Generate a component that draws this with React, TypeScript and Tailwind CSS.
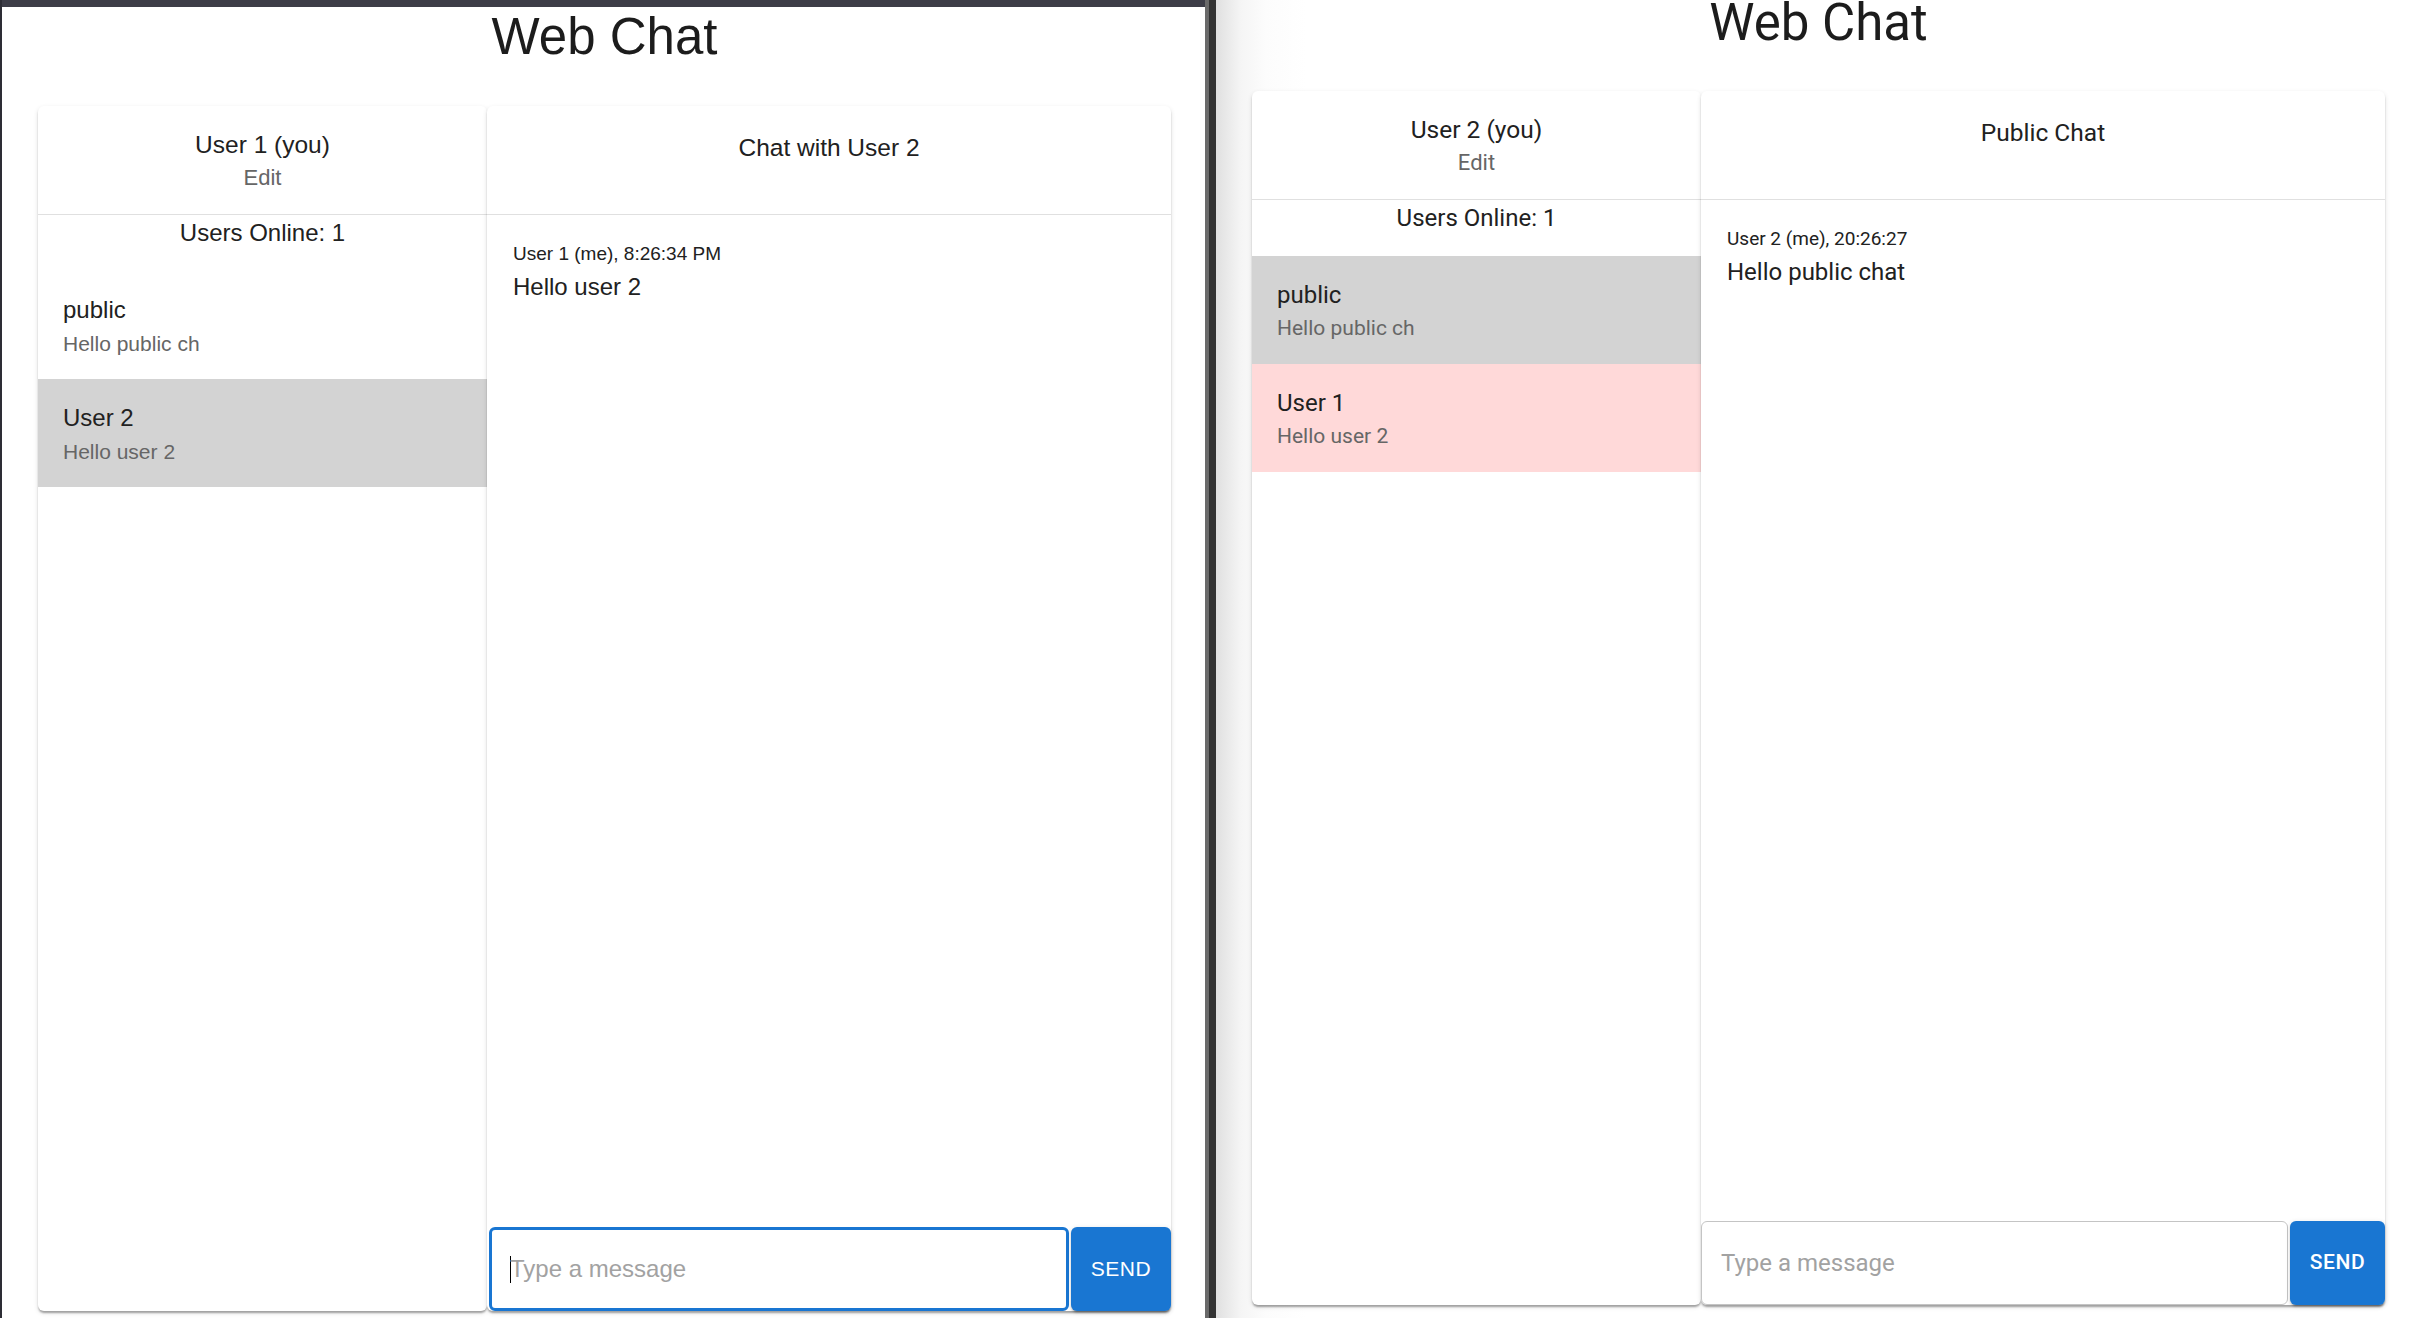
import React from "react";

type Row = { name: string; last: string; bg: string };

type CardProps = {
  me: string;
  rows: Row[];
  chatTitle: string;
  meta: string;
  msg: string;
  focused: boolean;
  heightClass: string;
  sendWidthClass: string;
};

const paperShadow =
  "shadow-[0px_3px_2px_-1px_rgba(0,0,0,0.2),0px_2px_2px_0px_rgba(0,0,0,0.14),0px_2px_5px_0px_rgba(0,0,0,0.12)]";

function Card({ me, rows, chatTitle, meta, msg, focused, heightClass, sendWidthClass }: CardProps) {
  return (
    <div className={`flex w-[1133px] ${heightClass}`}>
      <div className={`flex w-[449px] shrink-0 flex-col rounded-[6px] bg-white ${paperShadow}`}>
        <div className="flex h-[109px] shrink-0 flex-col items-center border-b border-[#e0e0e0] pt-[24px]">
          <div className="text-[24.5px] leading-[30px] text-[#212121]">{me}</div>
          <div className="mt-[3px] text-[22px] leading-[30px] text-[#666666]">Edit</div>
        </div>
        <div className="h-[56px] shrink-0 text-center text-[24px] leading-[36px] text-[#212121]">
          Users Online: 1
        </div>
        {rows.map((r) => (
          <div key={r.name} className={`h-[108px] shrink-0 pl-[25px] pt-[21px] ${r.bg}`}>
            <div className="text-[24px] leading-[36px] text-[#212121]">{r.name}</div>
            <div className="text-[21px] leading-[31px] text-[#666666]">{r.last}</div>
          </div>
        ))}
      </div>
      <div className={`flex w-[684px] shrink-0 flex-col rounded-[6px] bg-white ${paperShadow}`}>
        <div className="h-[109px] shrink-0 border-b border-[#e0e0e0] pt-[27px] text-center text-[24.5px] leading-[30px] text-[#212121]">
          {chatTitle}
        </div>
        <div className="flex-1 pl-[26px] pt-[25px]">
          <div className="text-[19px] leading-[27px] text-[#212121]">{meta}</div>
          <div className="mt-[2px] text-[24px] leading-[36px] text-[#212121]">{msg}</div>
        </div>
        <div className="flex h-[84px] shrink-0 gap-[2px]">
          {focused ? (
            <div className="ml-[2px] flex flex-1 items-center rounded-[6px] border-[3px] border-[#1976d2] bg-white pl-[18px]">
              <span className="-mr-px inline-block h-[27px] w-px bg-black" />
              <span className="text-[24px] text-[#a2a2a2]">Type a message</span>
            </div>
          ) : (
            <div className="flex flex-1 items-center rounded-[6px] border border-[#c4c4c4] bg-white pl-[19px]">
              <span className="text-[24px] text-[#a2a2a2]">Type a message</span>
            </div>
          )}
          <div
            className={`flex ${sendWidthClass} shrink-0 items-center justify-center rounded-[6px] bg-[#1976d2] text-[21px] font-medium uppercase tracking-[0.6px] text-white shadow-[0px_3px_1px_-2px_rgba(0,0,0,0.2),0px_2px_2px_0px_rgba(0,0,0,0.14),0px_1px_5px_0px_rgba(0,0,0,0.12)]`}
          >
            Send
          </div>
        </div>
      </div>
    </div>
  );
}

export default function App() {
  return (
    <div className="flex h-[1318px] w-[2415px] overflow-hidden bg-white">
      {/* left browser window */}
      <div className="flex w-[1205px] shrink-0 flex-col border-l-2 border-[#2d2d35] bg-white font-['Liberation_Sans',Arial,sans-serif]">
        <div className="h-[7px] shrink-0 bg-[#3d3d47]" />
        <div className="pl-[36px] pt-[7px]">
          <h1 className="w-[1133px] text-center text-[51px] leading-[46px] text-[#1c1c1c]">Web Chat</h1>
        </div>
        <div className="mt-[46px] pl-[36px]">
          <Card
            me="User 1 (you)"
            rows={[
              { name: "public", last: "Hello public ch", bg: "bg-white" },
              { name: "User 2", last: "Hello user 2", bg: "bg-[#d3d3d3]" },
            ]}
            chatTitle="Chat with User 2"
            meta="User 1 (me), 8:26:34 PM"
            msg="Hello user 2"
            focused={true}
            heightClass="h-[1205px]"
            sendWidthClass="w-[100px]"
          />
        </div>
      </div>
      {/* separator */}
      <div className="w-[4px] shrink-0 bg-[#6a6a6a]" />
      <div className="w-[7px] shrink-0 bg-[#333333]" />
      {/* right browser window */}
      <div className="flex w-[1199px] shrink-0 flex-col bg-[linear-gradient(to_right,#e0e0e0,#f5f5f5_25px,#fcfcfc_50px,#ffffff_90px)] font-['Roboto',sans-serif]">
        <div className="pl-[36px]">
          <h1 className="w-[1133px] text-center text-[51px] leading-[46px] text-[#1c1c1c]">Web Chat</h1>
        </div>
        <div className="mt-[45px] pl-[36px]">
          <Card
            me="User 2 (you)"
            rows={[
              { name: "public", last: "Hello public ch", bg: "bg-[#d3d3d3]" },
              { name: "User 1", last: "Hello user 2", bg: "bg-[#ffd9d9]" },
            ]}
            chatTitle="Public Chat"
            meta="User 2 (me), 20:26:27"
            msg="Hello public chat"
            focused={false}
            heightClass="h-[1214px]"
            sendWidthClass="w-[95px]"
          />
        </div>
      </div>
    </div>
  );
}
